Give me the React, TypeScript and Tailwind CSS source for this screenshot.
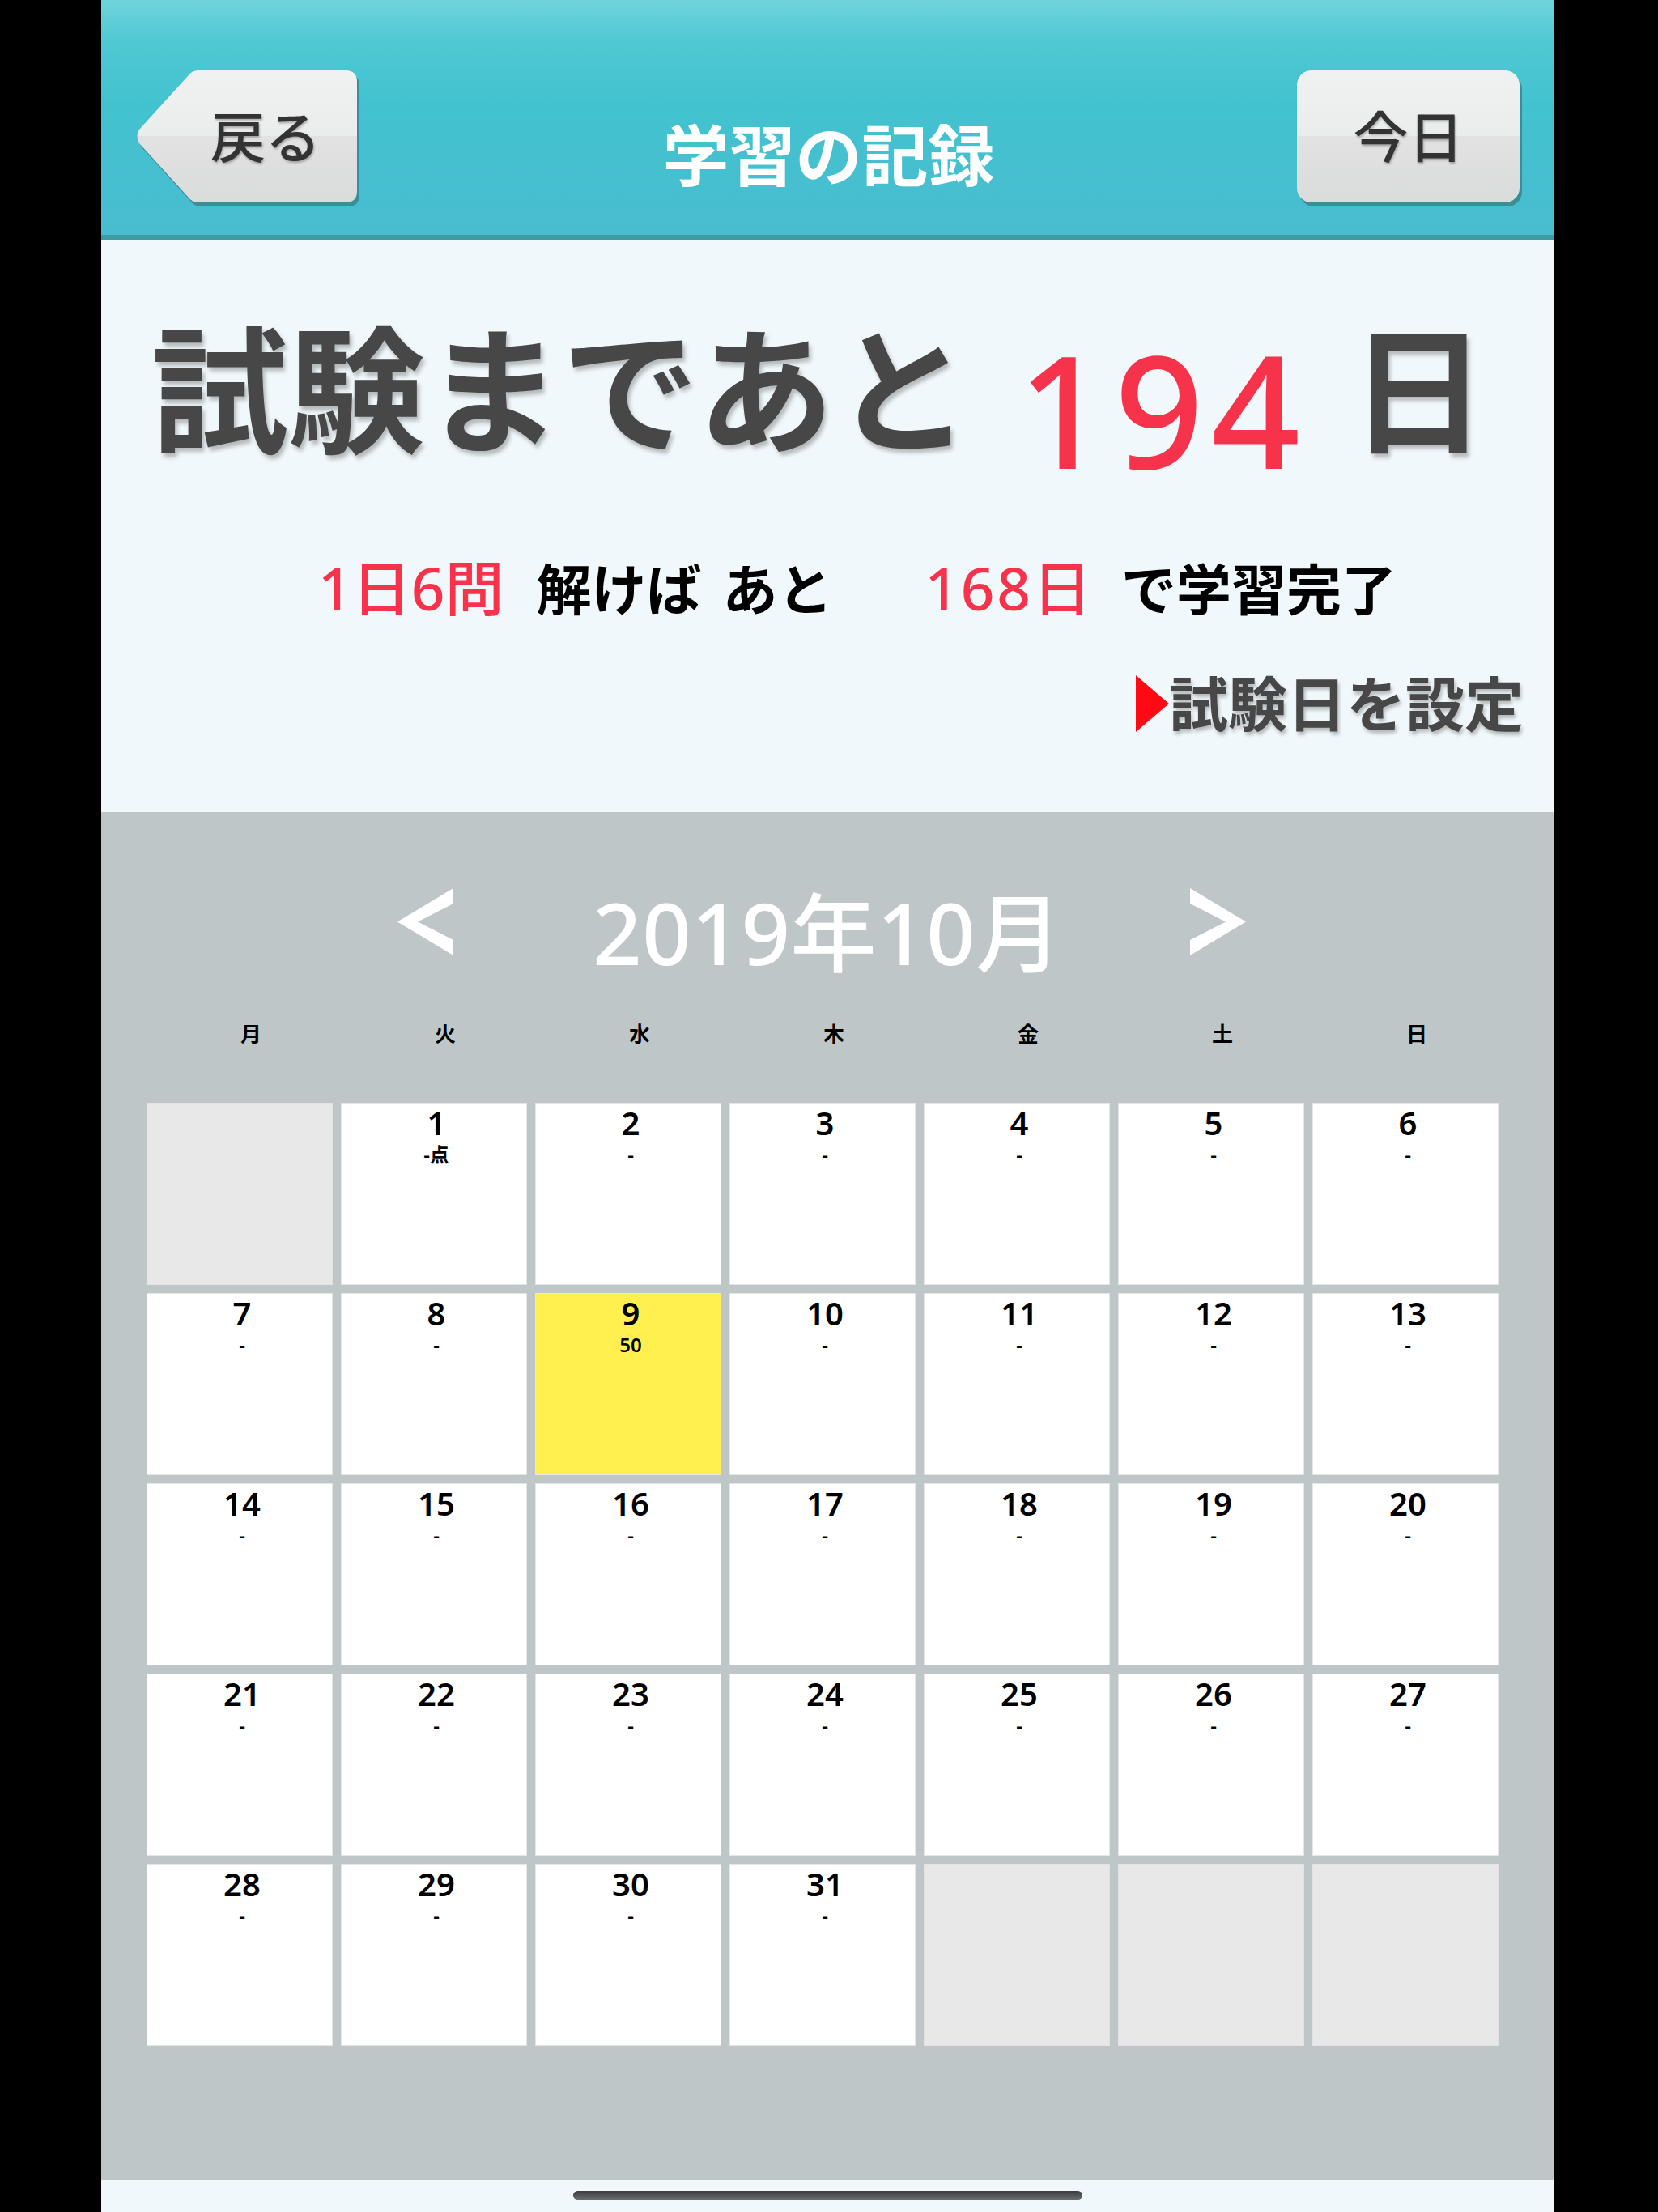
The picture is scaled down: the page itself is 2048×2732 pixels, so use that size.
const weekdays = ['月', '火', '水', '木', '金', '土', '日'];

// 2019年10月: starts on Tuesday
const cells: (number | null)[] = [null, ...Array.from({ length: 31 }, (_, i) => i + 1), null, null, null];

const notes: Record<number, string> = { 1: '-点', 9: '50' };
const today = 9;

function BackButton() {
  const shape =
    'M78 0H260Q274 0 274 14V149Q274 163 260 163H78Q70 163 65 156L5 90Q0 81.5 5 73L65 7Q70 0 78 0Z';
  return (
    <button className="relative w-[278px] h-[168px] flex items-center justify-center pl-[44px] pb-[5px]">
      <svg className="absolute inset-0" width="278" height="168" viewBox="0 0 278 168">
        <defs>
          <linearGradient id="backGrad" x1="0" y1="0" x2="0" y2="1">
            <stop offset="0" stopColor="#f0f1f1" />
            <stop offset="0.5" stopColor="#ebecec" />
            <stop offset="0.5" stopColor="#e1e2e1" />
            <stop offset="1" stopColor="#dadcdb" />
          </linearGradient>
        </defs>
        <path d={shape} fill="#3b8e98" transform="translate(3 5)" />
        <path d={shape} fill="url(#backGrad)" />
      </svg>
      <span className="relative text-[68px] leading-none font-medium text-[#333] [text-shadow:1px_2px_3px_rgba(0,0,0,0.3)]">
        戻る
      </span>
    </button>
  );
}

function TodayButton() {
  return (
    <button className="w-[275px] h-[163px] rounded-[18px] shadow-[3px_5px_0_#3b8e98] bg-[linear-gradient(to_bottom,#f0f1f1_0%,#ebecec_50%,#e1e2e1_50%,#dadcdb_100%)] flex items-center justify-center">
      <span className="text-[68px] leading-none font-medium text-[#333] [text-shadow:1px_2px_3px_rgba(0,0,0,0.3)]">
        今日
      </span>
    </button>
  );
}

function Chevron({ dir }: { dir: 'left' | 'right' }) {
  const pts = dir === 'left' ? '69,0 69,19 25,41.5 69,64 69,83 0,41.5' : '0,0 0,19 44,41.5 0,64 0,83 69,41.5';
  return (
    <svg width="69" height="83" viewBox="0 0 69 83" className="shrink-0">
      <polygon points={pts} fill="#ffffff" />
    </svg>
  );
}

export default function App() {
  return (
    <div className="w-[2048px] h-[2732px] bg-black flex pl-[125px] font-['Noto_Sans','Noto_Sans_CJK_JP',sans-serif]">
      <div className="w-[1794px] flex flex-col">
        {/* header */}
        <header className="h-[296px] shrink-0 border-b-[6px] border-[#3d9aa5] bg-[linear-gradient(to_bottom,#6fd4dc_0%,#4fc8d3_18%,#42c2cf_45%,#49bdd0_100%)] flex items-start px-[42px] pt-[87px]">
          <BackButton />
          <h1 className="flex-1 text-center text-white text-[82px] leading-none font-bold mt-[63px]">学習の記録</h1>
          <TodayButton />
        </header>

        {/* countdown */}
        <section className="h-[707px] shrink-0 bg-[#f1f8fb] flex flex-col">
          <div className="flex items-end pl-[62px] mt-[101px] text-[#474747] font-bold">
            <span className="text-[169px] leading-none [text-shadow:3px_5px_5px_rgba(0,0,0,0.25)]">試験まであと</span>
            <span className="ml-[58px] mb-[-35px] text-[192px] leading-none font-medium tracking-[0.05em] text-[#f7324b]">
              194
            </span>
            <span className="ml-[52px] text-[169px] leading-none [text-shadow:3px_5px_5px_rgba(0,0,0,0.25)]">日</span>
          </div>

          <div className="flex items-end pl-[268px] mt-[123px] leading-none">
            <span className="text-[73px] text-[#f7324b] font-medium">1日6問</span>
            <span className="ml-[40px] text-[68px] font-bold text-black">
              解けば<span className="inline-block w-[26px]" />あと
            </span>
            <span className="ml-[114px] text-[73px] tracking-[0.035em] text-[#f7324b] font-medium">168日</span>
            <span className="ml-[34px] text-[68px] font-bold text-black">で学習完了</span>
          </div>

          <div className="flex items-center justify-end pr-[37px] mt-[70px]">
            <span className="w-0 h-0 border-y-[35px] border-y-transparent border-l-[41px] border-l-[#ff0a14]" />
            <span className="text-[73px] leading-none font-bold text-[#474747] [text-shadow:2px_4px_4px_rgba(0,0,0,0.25)]">
              試験日を設定
            </span>
          </div>
        </section>

        {/* calendar */}
        <section className="h-[1689px] shrink-0 bg-[#bfc6c8] flex flex-col">
          <div className="flex items-start justify-center mt-[94px] pr-[14px]">
            <Chevron dir="left" />
            <span className="ml-[172px] mr-[158px] mt-[1px] text-[106px] leading-none font-medium tracking-[0.005em] text-white">
              2019年10月
            </span>
            <Chevron dir="right" />
          </div>

          <div className="grid grid-cols-7 gap-[10px] w-[1670px] ml-[70px] mt-[60px]">
            {weekdays.map((w) => (
              <span key={w} className="text-center text-[26px] leading-none font-bold text-black">
                {w}
              </span>
            ))}
          </div>

          <div className="grid grid-cols-7 gap-[10px] w-[1670px] ml-[56px] mt-[72px]">
            {cells.map((d, i) =>
              d === null ? (
                <div key={i} className="h-[225px] bg-[#e8e8e8] border border-[#e0e2e3]" />
              ) : (
                <div
                  key={i}
                  className={`h-[225px] border border-[#e3e5e6] flex flex-col items-center pt-[4px] pl-[6px] ${
                    d === today ? 'bg-[#fff04f]' : 'bg-white'
                  }`}
                >
                  <span className="text-[40px] leading-none font-semibold text-black">{d}</span>
                  <span className="mt-[7px] text-[24px] leading-none font-semibold text-black">{notes[d] ?? '-'}</span>
                </div>
              )
            )}
          </div>
        </section>

        {/* home indicator */}
        <div className="h-[40px] shrink-0 bg-[#f1f8fb] flex justify-center pt-[14px]">
          <div className="w-[629px] h-[11px] rounded-full bg-[linear-gradient(to_bottom,#3a3c3e,#6a6d70)]" />
        </div>
      </div>
    </div>
  );
}
